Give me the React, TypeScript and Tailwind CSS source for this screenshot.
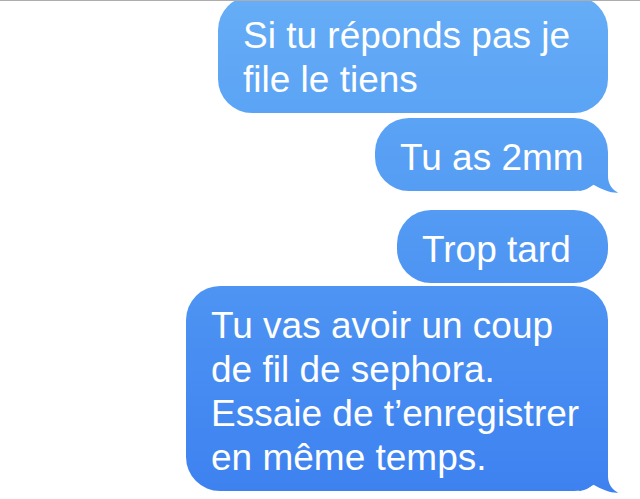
import React from "react";

// iMessage-style tail; shares the fixed gradient so its colour matches the bubble
const Tail = () => (
  <div
    aria-hidden="true"
    className="absolute right-[-11px] bottom-[-2px] w-[40px] h-[36px] bg-fixed bg-linear-to-b from-[#65adf6] to-[#3d81f0] [clip-path:path('M0_0_L29_0_L29_19_C29_27_33_33_39.5_35.6_C33_36.4_24_33_14_27.5_C10_31_6_33.5_0_34_Z')]"
  />
);

type BubbleProps = {
  width: string;
  mt: string;
  lines: string[];
  tail?: boolean;
};

const Bubble = ({ width, mt, lines, tail }: BubbleProps) => (
  <div
    className={`relative ${width} ${mt} rounded-[34px] bg-fixed bg-linear-to-b from-[#65adf6] to-[#3d81f0] pl-[25px] pt-[18px] pb-[11px] text-white text-[37px] leading-[44px] whitespace-nowrap`}
    style={{ fontFamily: '"Liberation Sans", Arial, sans-serif' }}
  >
    {tail && <Tail />}
    {lines.map((l, i) => (
      <div key={i} className="relative">
        {l}
      </div>
    ))}
  </div>
);

export default function App() {
  return (
    <div className="w-[640px] h-[499px] bg-white overflow-hidden">
      {/* status line at the top edge */}
      <div className="relative z-10 h-px bg-[#adadad]" />

      <div className="flex flex-col items-end pr-[32px]">
        <Bubble
          width="w-[390px]"
          mt="-mt-[5px]"
          lines={["Si tu réponds pas je", "file le tiens"]}
        />
        <Bubble width="w-[233px]" mt="mt-[5px]" lines={["Tu as 2mm"]} tail />
        <Bubble width="w-[211px]" mt="mt-[19px]" lines={["Trop tard"]} />
        <Bubble
          width="w-[422px]"
          mt="mt-[3px]"
          lines={[
            "Tu vas avoir un coup",
            "de fil de sephora.",
            "Essaie de t’enregistrer",
            "en même temps.",
          ]}
          tail
        />
      </div>
    </div>
  );
}
